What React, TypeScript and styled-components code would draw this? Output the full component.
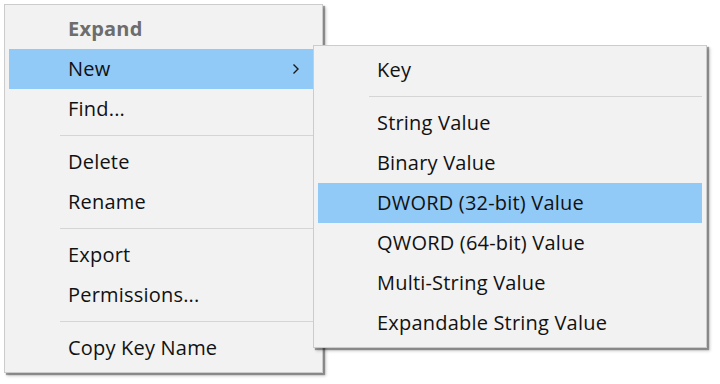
import React from "react";
import styled, {createGlobalStyle} from "styled-components";

const GlobalStyle = createGlobalStyle`
  html, body {
    margin: 0;
    padding: 0;
    background: #fff;
  }
  body {
    font-family: "Open Sans", "Noto Sans", sans-serif;
  }
`;

const Stage = styled.div`
  position: relative;
  width: 720px;
  height: 384px;
  padding: 4px;
  box-sizing: border-box;
`;

const Menu = styled.div`
  box-sizing: border-box;
  width: 319px;
  padding: 4px;
  background: #f2f2f2;
  border: 1px solid #cccccc;
  box-shadow: 2px 2px 1px rgba(0, 0, 0, 0.35), 3px 3px 3px rgba(0, 0, 0, 0.2);

  display: flex;
  flex-direction: column;
`;

const SubMenu = styled(Menu)`
  position: absolute;
  left: 313px;
  top: 45px;
  width: 394px;
`;

const Item = styled.div<{ $active?: boolean; $muted?: boolean }>`
  box-sizing: border-box;
  height: 40px;
  padding: 0 18px 1px 59px;

  display: flex;
  align-items: center;
  justify-content: space-between;

  background: ${p => (p.$active ? "#91c9f7" : "transparent")};
  color: ${p => (p.$muted ? "#6d6d6d" : "#111")};
  font-size: 20px;
  letter-spacing: 0.2px;
  font-weight: ${p => (p.$muted ? 700 : 400)};
`;

const Separator = styled.div`
  height: 13px;
  display: flex;
  align-items: center;
  padding-left: 51px;

  &::after {
    content: "";
    flex: 1;
    height: 1px;
    background: #d5d5d5;
  }
`;

const Chevron = () => (
  <svg width="8" height="12" viewBox="0 0 8 12">
    <polyline points="1.5,1.5 6,6 1.5,10.5" fill="none" stroke="#1a1a1a" strokeWidth="1.4"/>
  </svg>
);

const App = () => {
  return (
    <Stage>
      <GlobalStyle/>
      <Menu>
        <Item $muted>Expand</Item>
        <Item $active>New <Chevron/></Item>
        <Item>Find...</Item>
        <Separator/>
        <Item>Delete</Item>
        <Item>Rename</Item>
        <Separator/>
        <Item>Export</Item>
        <Item>Permissions...</Item>
        <Separator/>
        <Item>Copy Key Name</Item>
      </Menu>
      <SubMenu>
        <Item>Key</Item>
        <Separator/>
        <Item>String Value</Item>
        <Item>Binary Value</Item>
        <Item $active>DWORD (32-bit) Value</Item>
        <Item>QWORD (64-bit) Value</Item>
        <Item>Multi-String Value</Item>
        <Item>Expandable String Value</Item>
      </SubMenu>
    </Stage>
  );
};

export default App;
